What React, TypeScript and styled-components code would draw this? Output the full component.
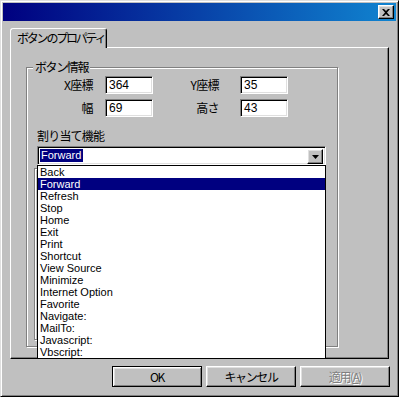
import React from 'react';
import styled, { createGlobalStyle, css } from 'styled-components';

const GlobalStyle = createGlobalStyle`
  html, body { margin: 0; padding: 0; background: #c0c0c0; }
  body {
    font-family: "Liberation Sans", "Noto Sans CJK JP", sans-serif;
    font-size: 11px;
    color: #000;
  }
`;

const jp = `"Noto Sans CJK JP", "Liberation Sans", sans-serif`;

const raised = css`
  border: 1px solid;
  border-color: #fff #000 #000 #fff;
  box-shadow: inset -1px -1px #808080, inset 1px 1px #dfdfdf;
`;

const sunken = css`
  border: 1px solid;
  border-color: #808080 #fff #fff #808080;
  box-shadow: inset 1px 1px #000, inset -1px -1px #dfdfdf;
`;

const Window = styled.div`
  box-sizing: border-box;
  width: 399px;
  height: 397px;
  padding: 2px;
  background: #c0c0c0;
  border: 1px solid;
  border-color: #dfdfdf #000 #000 #dfdfdf;
  box-shadow: inset 1px 1px #fff, inset -1px -1px #808080;
  display: flex;
  flex-direction: column;
`;

const TitleBar = styled.div`
  height: 18px;
  flex: none;
  display: flex;
  align-items: center;
  justify-content: flex-end;
  padding-right: 2px;
  background: linear-gradient(to right, #000080, #1084d0);
`;

const CloseButton = styled.div`
  box-sizing: border-box;
  width: 16px;
  height: 14px;
  background: #c0c0c0;
  display: flex;
  align-items: center;
  justify-content: center;
  ${raised}
`;

const Body = styled.div`
  padding: 7px 7px 0 7px;
  display: flex;
  flex-direction: column;
`;

const TabStrip = styled.div`
  display: flex;
  position: relative;
  z-index: 1;
  margin-bottom: -1px;
`;

const Tab = styled.div`
  box-sizing: border-box;
  height: 20px;
  width: 97px;
  padding: 2px 0 0 6px;
  background: #c0c0c0;
  border: 1px solid;
  border-bottom: none;
  border-color: #fff #000 transparent #fff;
  border-radius: 3px 3px 0 0;
  box-shadow: inset -1px 0 #808080;
  font-family: ${jp};
  font-size: 12px;
  line-height: 14px;
  letter-spacing: -2.2px;
  white-space: nowrap;
`;

const Panel = styled.div`
  box-sizing: border-box;
  width: 379px;
  height: 312px;
  padding: 13px 0 0 15px;
  border: 1px solid;
  border-color: #fff #000 #000 #fff;
  box-shadow: inset -1px -1px #808080;
`;

const Group = styled.fieldset`
  box-sizing: border-box;
  width: 312px;
  margin: 0;
  padding: 3px 0 6px 10px;
  border: 1px solid #808080;
  box-shadow: inset 1px 1px #fff, 1px 1px #fff;
`;

const Legend = styled.legend`
  margin-left: -4px;
  padding: 0 2px;
  background: #c0c0c0;
  font-family: ${jp};
  font-size: 12px;
  line-height: 12px;
  letter-spacing: -1.4px;
`;

const FieldGrid = styled.div`
  display: grid;
  grid-template-columns: 68px 48px 87px 48px;
  grid-auto-rows: 18px;
  row-gap: 5px;
  align-items: center;
`;

const FieldLabel = styled.div<{ $gap: number }>`
  text-align: right;
  padding-right: ${p => p.$gap}px;
  font-family: ${jp};
  font-size: 12px;
  line-height: 14px;
  letter-spacing: -0.6px;
`;

const TextBox = styled.div`
  box-sizing: border-box;
  height: 18px;
  padding: 0 3px;
  background: #fff;
  font-size: 12px;
  line-height: 16px;
  ${sunken}
`;

const SectionLabel = styled.div`
  margin-top: 12px;
  font-family: ${jp};
  font-size: 12px;
  line-height: 13px;
  letter-spacing: -0.8px;
`;

const ComboWrap = styled.div`
  position: relative;
  margin-top: 4px;
  width: 289px;
`;

const Combo = styled.div`
  box-sizing: border-box;
  height: 19px;
  padding: 2px 2px 0 2px;
  display: flex;
  justify-content: space-between;
  background: #fff;
  ${sunken}
`;

const ComboValue = styled.span`
  align-self: flex-start;
  padding: 0 2px 0 1px;
  height: 13px;
  line-height: 13px;
  background: #000080;
  color: #fff;
  font-size: 11px;
`;

const ComboButton = styled.div`
  box-sizing: border-box;
  width: 16px;
  height: 15px;
  background: #c0c0c0;
  display: flex;
  align-items: center;
  justify-content: center;
  ${raised}
`;

const DropList = styled.ul`
  position: absolute;
  top: 100%;
  left: 0;
  width: 289px;
  box-sizing: border-box;
  margin: 0;
  padding: 0;
  list-style: none;
  background: #fff;
  border: 1px solid #000;
  z-index: 2;
`;

const DropItem = styled.li<{ $active?: boolean }>`
  height: 12px;
  line-height: 12px;
  padding-left: 2px;
  font-size: 11px;
  white-space: nowrap;
  background: ${p => (p.$active ? '#000080' : 'transparent')};
  color: ${p => (p.$active ? '#fff' : '#000')};
`;

const InnerFrame = styled.div`
  margin: 3px 0 0 -3px;
  width: 250px;
  height: 170px;
  border: 1px solid #808080;
  box-shadow: inset 1px 1px #fff, 1px 1px #fff;
`;

const ButtonRow = styled.div`
  display: flex;
  justify-content: flex-end;
  gap: 4px;
  margin: 7px -1px 0 0;
`;

const Button = styled.div<{ $default?: boolean; $disabled?: boolean }>`
  box-sizing: border-box;
  width: 90px;
  height: 21px;
  display: flex;
  align-items: center;
  justify-content: center;
  font-family: ${jp};
  font-size: 12px;
  letter-spacing: -1.4px;
  ${raised}
  ${p =>
    p.$default &&
    css`
      border: 1px solid #000;
      box-shadow: inset 1px 1px #fff, inset -1px -1px #808080, inset 2px 2px #dfdfdf;
    `}
  ${p =>
    p.$disabled &&
    css`
      color: #808080;
      text-shadow: 1px 1px #fff;
    `}
`;

const commands = [
  'Back', 'Forward', 'Refresh', 'Stop', 'Home', 'Exit', 'Print', 'Shortcut',
  'View Source', 'Minimize', 'Internet Option', 'Favorite', 'Navigate:',
  'MailTo:', 'Javascript:', 'Vbscript:',
];

export default function App() {
  const selected = 'Forward';
  return (
    <>
      <GlobalStyle />
      <Window>
        <TitleBar>
          <CloseButton>
            <svg width="8" height="7" viewBox="0 0 8 7">
              <path d="M0 0h2l2 2 2-2h2L5 3.5 8 7H6L4 5 2 7H0l3-3.5z" fill="#000" />
            </svg>
          </CloseButton>
        </TitleBar>
        <Body>
          <TabStrip>
            <Tab>ボタンのプロパティ</Tab>
          </TabStrip>
          <Panel>
            <Group>
              <Legend>ボタン情報</Legend>
              <FieldGrid>
                <FieldLabel $gap={12}>X座標</FieldLabel>
                <TextBox>364</TextBox>
                <FieldLabel $gap={21}>Y座標</FieldLabel>
                <TextBox>35</TextBox>
                <FieldLabel $gap={12}>幅</FieldLabel>
                <TextBox>69</TextBox>
                <FieldLabel $gap={21}>高さ</FieldLabel>
                <TextBox>43</TextBox>
              </FieldGrid>
              <SectionLabel>割り当て機能</SectionLabel>
              <ComboWrap>
                <Combo>
                  <ComboValue>{selected}</ComboValue>
                  <ComboButton>
                    <svg width="7" height="4" viewBox="0 0 7 4">
                      <path d="M0 0h7L3.5 4z" fill="#000" />
                    </svg>
                  </ComboButton>
                </Combo>
                <DropList>
                  {commands.map(c => (
                    <DropItem key={c} $active={c === selected}>{c}</DropItem>
                  ))}
                </DropList>
              </ComboWrap>
              <InnerFrame />
            </Group>
          </Panel>
          <ButtonRow>
            <Button $default>OK</Button>
            <Button>キャンセル</Button>
            <Button $disabled>
              適用(<u>A</u>)
            </Button>
          </ButtonRow>
        </Body>
      </Window>
    </>
  );
}
